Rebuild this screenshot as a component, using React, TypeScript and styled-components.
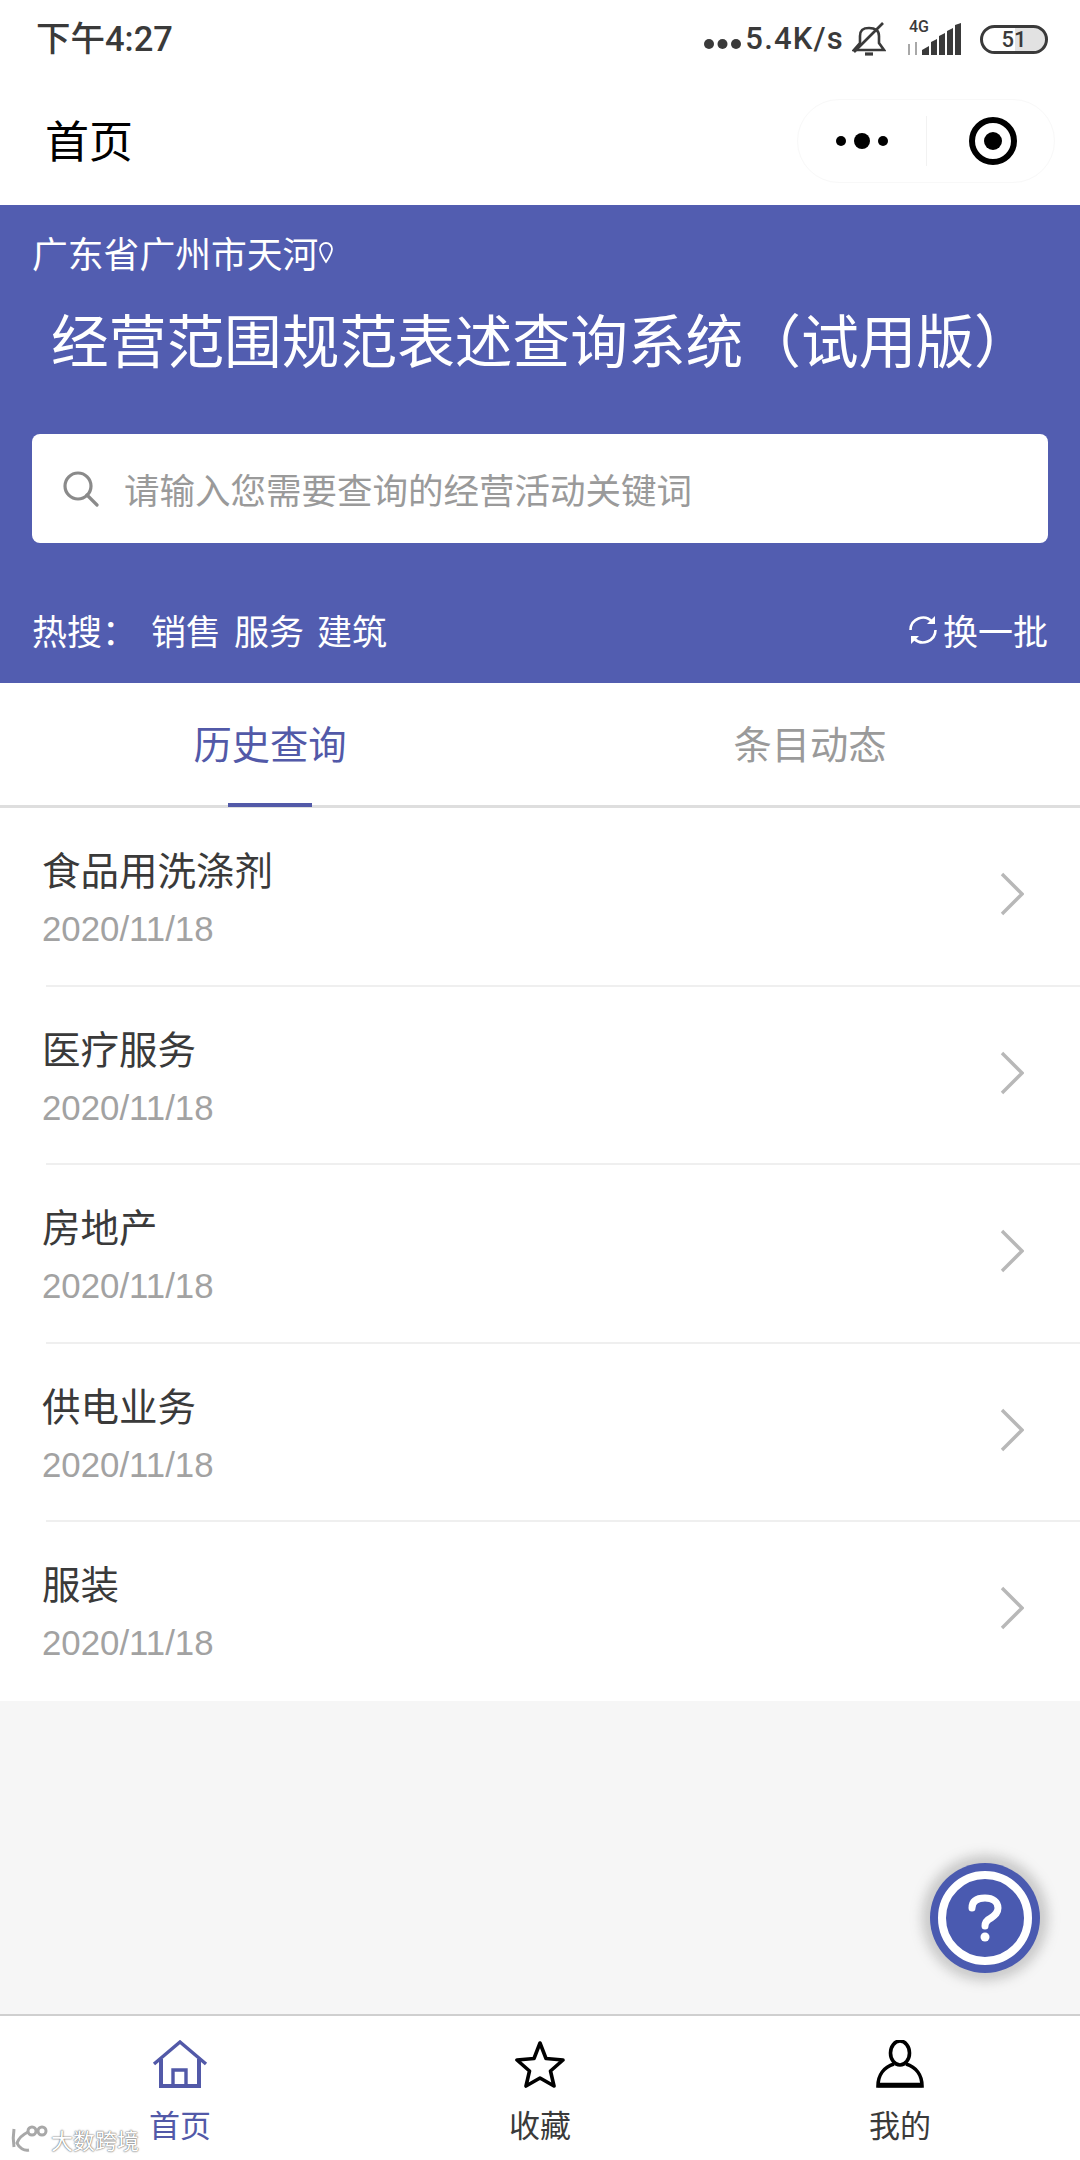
import React from "react";
import styled, { createGlobalStyle } from "styled-components";

const Global = createGlobalStyle`
  html, body { margin: 0; padding: 0; background: #f6f6f6; }
  * { box-sizing: border-box; }
  body { font-family: "Noto Sans CJK SC", "Liberation Sans", sans-serif; }
`;

const Page = styled.div`
  position: relative;
  width: 1080px;
  height: 2160px;
  display: flex;
  flex-direction: column;
  background: #f6f6f6;
  overflow: hidden;
`;

const StatusBar = styled.div`
  height: 70px;
  padding: 8px 32px 0 36px;
  background: #fff;
  display: flex;
  align-items: center;
  justify-content: space-between;
  color: #3a3a3a;
`;
const Clock = styled.span`
  font-size: 34.5px;
  font-weight: 500;
  line-height: 50px;
  font-family: "Roboto", "Noto Sans CJK SC", sans-serif;
`;
const StatusGroup = styled.div`
  display: flex;
  align-items: center;
`;
const Speed = styled.span`
  font-family: "Roboto", sans-serif;
  font-size: 31px;
  font-weight: 500;
  line-height: 40px;
  letter-spacing: 1.2px;
  margin: 0 8px 0 4px;
`;
const SignalBlock = styled.div`
  position: relative;
  width: 58px;
  height: 32px;
  margin: 0 16px 0 20px;
`;
const NetLabel = styled.span`
  position: absolute;
  top: -4px;
  left: 3px;
  font-family: "Roboto", sans-serif;
  font-size: 16px;
  font-weight: 500;
  line-height: 16px;
`;
const Battery = styled.span`
  width: 68px;
  height: 29px;
  border: 3px solid #3a3a3a;
  border-radius: 15px;
  display: flex;
  align-items: center;
  justify-content: center;
  font-family: "Roboto", sans-serif;
  font-size: 22px;
  font-weight: 500;
  background: linear-gradient(90deg, #fff 51%, #e2e2e2 51%);
`;

const NavBar = styled.div`
  height: 135px;
  padding: 2px 25px 0 45px;
  background: #fff;
  display: flex;
  align-items: center;
  justify-content: space-between;
`;
const NavTitle = styled.h1`
  margin: 0;
  font-size: 44px;
  font-weight: 400;
  line-height: 60px;
  color: #000;
`;
const Capsule = styled.div`
  width: 258px;
  height: 84px;
  margin-top: 4px;
  border: 1px solid #f8f8f8;
  border-radius: 42px;
  display: grid;
  grid-template-columns: 1fr 1px 1fr;
  align-items: center;
  justify-items: center;
`;
const CapsuleDivider = styled.span`
  width: 1px;
  height: 50px;
  background: #f2f2f2;
`;
const TargetIcon = styled.svg`
  margin-left: 6px;
`;

const Banner = styled.section`
  height: 478px;
  padding: 22px 32px 0;
  background: #525db0;
  color: #fff;
`;
const Location = styled.div`
  display: flex;
  align-items: center;
  font-size: 35.8px;
  line-height: 50px;
`;
const AppTitle = styled.h2`
  margin: 21px 0 0;
  padding-left: 19px;
  font-size: 57.7px;
  font-weight: 400;
  line-height: 80px;
  white-space: nowrap;
`;
const SearchBox = styled.div`
  margin-top: 56px;
  height: 109px;
  padding-left: 30px;
  background: #fff;
  border-radius: 8px;
  display: flex;
  align-items: center;
  gap: 25px;
`;
const Placeholder = styled.span`
  font-size: 35.5px;
  line-height: 50px;
  color: #9a9a9a;
`;
const HotRow = styled.div`
  margin-top: 62px;
  display: flex;
  align-items: center;
  font-size: 35px;
  line-height: 50px;
`;
const HotLabel = styled.span`
  width: 119px;
`;
const HotWord = styled.span`
  margin-right: 13px;
`;
const Refresh = styled.span`
  margin-left: auto;
  display: flex;
  align-items: center;
  gap: 4px;
`;

const Tabs = styled.nav`
  height: 125px;
  background: #fff;
  border-bottom: 3px solid #dedede;
  display: grid;
  grid-template-columns: 1fr 1fr;
`;
const Tab = styled.div<{ $active?: boolean }>`
  position: relative;
  display: flex;
  align-items: center;
  justify-content: center;
  padding-bottom: 4px;
  font-size: 38.3px;
  color: ${(p) => (p.$active ? "#5259a8" : "#9a9a9a")};
  &::after {
    content: "";
    display: ${(p) => (p.$active ? "block" : "none")};
    position: absolute;
    left: 228px;
    bottom: -2px;
    width: 84px;
    height: 4px;
    background: #5259a8;
  }
`;

const List = styled.ul`
  margin: 0;
  padding: 0;
  list-style: none;
  background: #fff;
`;
const Row = styled.li`
  position: relative;
  height: 178.5px;
  padding: 35px 56px 0 42px;
  display: flex;
  align-items: flex-start;
  justify-content: space-between;
  &:not(:last-child)::after {
    content: "";
    position: absolute;
    left: 46px;
    right: 0;
    bottom: 0;
    height: 2px;
    background: #efefef;
  }
`;
const RowTitle = styled.div`
  font-size: 38.5px;
  line-height: 50px;
  color: #3a3a3a;
`;
const RowDate = styled.div`
  margin-top: 11px;
  font-family: "Liberation Sans", sans-serif;
  font-size: 34.8px;
  line-height: 50px;
  color: #a2a2a2;
`;
const Chevron = styled.svg`
  margin-top: 29px;
`;

const Spacer = styled.div`
  flex: 1;
`;

const HelpButton = styled.div`
  position: absolute;
  left: 930px;
  top: 1863px;
  width: 110px;
  height: 110px;
  border-radius: 50%;
  background: #4a5ab0;
  box-shadow: 0 0 12px 8px rgba(130, 130, 130, 0.38);
  display: flex;
  align-items: center;
  justify-content: center;
`;
const HelpRing = styled.div`
  width: 94px;
  height: 94px;
  border: 8px solid #fff;
  border-radius: 50%;
  display: flex;
  align-items: center;
  justify-content: center;
`;

const TabBar = styled.footer`
  height: 146px;
  background: #fff;
  border-top: 2px solid #cfcfcf;
  display: grid;
  grid-template-columns: repeat(3, 1fr);
`;
const TabItem = styled.div<{ $active?: boolean }>`
  padding-top: 24px;
  display: flex;
  flex-direction: column;
  align-items: center;
  color: ${(p) => (p.$active ? "#5259a8" : "#3a3a3a")};
`;
const TabLabel = styled.span`
  margin-top: 16px;
  font-size: 31px;
  line-height: 40px;
`;

const Watermark = styled.div`
  position: absolute;
  left: 10px;
  bottom: 6px;
  display: flex;
  align-items: center;
  gap: 3px;
  color: #fff;
  font-size: 22px;
  line-height: 26px;
  text-shadow: 0 0 2px #666, 0 0 1px #666;
`;

const rows = ["食品用洗涤剂", "医疗服务", "房地产", "供电业务", "服装"];

export default function App() {
  return (
    <Page>
      <Global />
      <StatusBar>
        <Clock>下午4:27</Clock>
        <StatusGroup>
          <svg width="37" height="12" viewBox="0 0 37 12" style={{ marginTop: 10 }}>
            <circle cx="5" cy="6" r="5" fill="#3a3a3a" />
            <circle cx="18.500" cy="6" r="5" fill="#3a3a3a" />
            <circle cx="32" cy="6" r="5" fill="#3a3a3a" />
          </svg>
          <Speed>5.4K/s</Speed>
          <svg width="34" height="34" viewBox="0 0 34 34" fill="none" stroke="#3a3a3a" strokeWidth="2.6">
            <path d="M2 28h30l-5-7V14C27 8 23 6 17 6S8 8 8 14v7z" />
            <path d="M13 32h8" strokeWidth="3.200" />
            <path d="M2 30 31 1" />
          </svg>
          <SignalBlock>
            <NetLabel>4G</NetLabel>
            <svg width="58" height="32" viewBox="0 0 58 32">
              <path d="M3 32V21M10 32V19" stroke="#a8a8a8" strokeWidth="2" fill="none" />
              <path d="M16 32v-5l7-4v9zM25 32V19l6-3v16zM33 32V13l6-3v22zM41 32V8l6-3v27zM49 32V2l6-2v32z" fill="#3a3a3a" />
            </svg>
          </SignalBlock>
          <Battery>51</Battery>
        </StatusGroup>
      </StatusBar>

      <NavBar>
        <NavTitle>首页</NavTitle>
        <Capsule>
          <svg width="52" height="18" viewBox="0 0 52 18">
            <circle cx="5" cy="9" r="5" fill="#000" />
            <circle cx="26" cy="9" r="8" fill="#000" />
            <circle cx="47" cy="9" r="5" fill="#000" />
          </svg>
          <CapsuleDivider />
          <TargetIcon width="48" height="48" viewBox="0 0 48 48">
            <circle cx="24" cy="24" r="21" fill="none" stroke="#000" strokeWidth="6" />
            <circle cx="24" cy="24" r="9" fill="#000" />
          </TargetIcon>
        </Capsule>
      </NavBar>

      <Banner>
        <Location>
          广东省广州市天河
          <svg width="16" height="24" viewBox="0 0 16 24" fill="none" stroke="#fff" strokeWidth="1.800">
            <path d="M8 22C4 16 2 13 2 9a6 6 0 0 1 12 0c0 4-2 7-6 13z" />
          </svg>
        </Location>
        <AppTitle>经营范围规范表述查询系统（试用版）</AppTitle>
        <SearchBox>
          <svg width="37" height="37" viewBox="0 0 37 37" fill="none" stroke="#8a8a8a" strokeWidth="3.200">
            <circle cx="16" cy="16" r="13" />
            <path d="M25 25l10 10" strokeLinecap="round" />
          </svg>
          <Placeholder>请输入您需要查询的经营活动关键词</Placeholder>
        </SearchBox>
        <HotRow>
          <HotLabel>热搜：</HotLabel>
          <HotWord>销售</HotWord>
          <HotWord>服务</HotWord>
          <HotWord>建筑</HotWord>
          <Refresh>
            <svg width="32" height="32" viewBox="0 0 32 32" fill="none" stroke="#fff" strokeWidth="2.600">
              <path d="M3.500 16A12.500 12.500 0 0 1 25 7.500" />
              <path d="M28.500 16A12.500 12.500 0 0 1 7 24.500" />
              <path d="M28 2v8h-8zM4 30v-8h8z" fill="#fff" stroke="none" />
            </svg>
            换一批
          </Refresh>
        </HotRow>
      </Banner>

      <Tabs>
        <Tab $active>历史查询</Tab>
        <Tab>条目动态</Tab>
      </Tabs>

      <List>
        {rows.map((r) => (
          <Row key={r}>
            <div>
              <RowTitle>{r}</RowTitle>
              <RowDate>2020/11/18</RowDate>
            </div>
            <Chevron width="24" height="44" viewBox="0 0 24 44" fill="none" stroke="#b8b8b8" strokeWidth="3.400">
              <path d="M2 2l20 20L2 42" />
            </Chevron>
          </Row>
        ))}
      </List>

      <Spacer />

      <HelpButton>
        <HelpRing>
          <svg width="34" height="48" viewBox="0 0 34 48" fill="none" stroke="#fff" strokeWidth="7" strokeLinecap="round">
            <path d="M4 14C4 7 9 4 17 4s13 4 13 10c0 5-3 7-7 10-4 2-6 4-6 8" />
            <circle cx="17" cy="43" r="4.500" fill="#fff" stroke="none" />
          </svg>
        </HelpRing>
      </HelpButton>

      <TabBar>
        <TabItem $active>
          <svg width="56" height="48" viewBox="0 0 56 48" fill="none" stroke="#5259a8" strokeWidth="3.400">
            <path d="M2 24 28 2l26 22" />
            <path d="M9 19v27h38V19" strokeWidth="4" />
            <path d="M21 46V30h13v16" />
          </svg>
          <TabLabel>首页</TabLabel>
        </TabItem>
        <TabItem>
          <svg width="52" height="48" viewBox="0 0 52 48" fill="none" stroke="#000" strokeWidth="3.600">
            <path d="M26 3l6 15.500L49 20 36.500 31l3.500 15-14-8-14 8 3.500-15L3 20l17-1.500z" strokeLinejoin="round" />
          </svg>
          <TabLabel>收藏</TabLabel>
        </TabItem>
        <TabItem>
          <svg width="50" height="48" viewBox="0 0 50 48" fill="none" stroke="#000" strokeWidth="3.600">
            <ellipse cx="25" cy="13" rx="9.500" ry="12" />
            <path d="M19 24C9 27 3 35 3 46h44c0-11-6-19-16-22" />
            <path d="M3 45h44" strokeWidth="4.500" />
          </svg>
          <TabLabel>我的</TabLabel>
        </TabItem>
      </TabBar>

      <Watermark>
        <svg width="38" height="30" viewBox="0 0 38 30" fill="none" stroke="#a8a8a8" strokeWidth="3">
          <path d="M4 5c-1 6-1 12 0 18M18 8C10 12 8 16 7 19c2 5 7 8 12 7" />
          <circle cx="22" cy="7" r="4" />
          <circle cx="32" cy="7" r="4" />
        </svg>
        <span>大数跨境</span>
      </Watermark>
    </Page>
  );
}
